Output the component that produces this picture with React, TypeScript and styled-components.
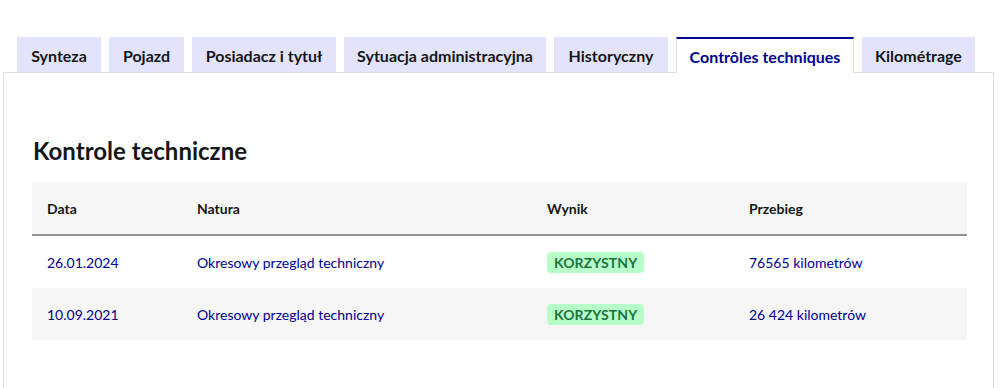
import styled, { createGlobalStyle } from "styled-components";

const GlobalStyle = createGlobalStyle`
  body {
    margin: 0;
    background: #fff;
    font-family: Lato, "Noto Sans", sans-serif;
    color: #161616;
  }
`;

const Page = styled.div`
  padding: 37px 0 0 3px;
  width: 991px;
`;

const TabList = styled.div`
  display: flex;
  gap: 8px;
  padding-left: 14px;
  position: relative;
  z-index: 1;
  margin-bottom: -1px;
`;

const Tab = styled.div<{ $active?: boolean; $w: number }>`
  box-sizing: border-box;
  width: ${(p) => p.$w}px;
  height: ${(p) => (p.$active ? 36 : 35)}px;
  display: flex;
  align-items: center;
  justify-content: center;
  font-size: 16px;
  font-weight: 700;
  white-space: nowrap;
  background: ${(p) => (p.$active ? "#fff" : "#e3e3fd")};
  color: ${(p) => (p.$active ? "#000091" : "#161616")};
  border-top: ${(p) => (p.$active ? "2px solid #000091" : "none")};
  border-left: ${(p) => (p.$active ? "1px solid #ddd" : "none")};
  border-right: ${(p) => (p.$active ? "1px solid #ddd" : "none")};
  padding-top: ${(p) => (p.$active ? 0 : 1)}px;
`;

const Panel = styled.section`
  border: 1px solid #dddddd;
  border-bottom: none;
  height: 320px;
  padding: 0 26px 0 28px;
`;

const Title = styled.h2`
  margin: 64px 0 17px 1px;
  font-size: 24px;
  font-weight: 700;
  line-height: 28px;
  color: #161616;
`;

const Table = styled.table`
  width: 100%;
  table-layout: fixed;
  border-collapse: collapse;
  font-size: 14px;
`;

const HeadCell = styled.th<{ $w?: number }>`
  box-sizing: border-box;
  width: ${(p) => (p.$w ? `${p.$w}px` : "auto")};
  text-align: left;
  font-weight: 700;
  background: #f6f6f6;
  height: 53px;
  padding: 0 15px;
  border-bottom: 2px solid #929292;
  color: #161616;
`;

const Row = styled.tr<{ $alt?: boolean }>`
  background: ${(p) => (p.$alt ? "#f6f6f6" : "#fff")};
`;

const Cell = styled.td`
  height: 52px;
  padding: 0 15px;
  color: #000091;
  white-space: nowrap;
`;

const Badge = styled.span`
  display: inline-block;
  background: #b8fec9;
  color: #18753c;
  font-weight: 700;
  font-size: 14px;
  letter-spacing: 0.1px;
  line-height: 21px;
  padding: 0 7px;
  border-radius: 4px;
`;

const tabs = [
  { label: "Synteza", w: 84 },
  { label: "Pojazd", w: 75 },
  { label: "Posiadacz i tytuł", w: 144 },
  { label: "Sytuacja administracyjna", w: 202 },
  { label: "Historyczny", w: 114 },
  { label: "Contrôles techniques", w: 178, active: true },
  { label: "Kilométrage", w: 113 },
];

const rows = [
  { date: "26.01.2024", nature: "Okresowy przegląd techniczny", km: "76565 kilometrów" },
  { date: "10.09.2021", nature: "Okresowy przegląd techniczny", km: "26 424 kilometrów" },
];

export default function App() {
  return (
    <>
      <GlobalStyle />
      <Page>
        <TabList>
          {tabs.map((t) => (
            <Tab key={t.label} $w={t.w} $active={t.active}>
              {t.label}
            </Tab>
          ))}
        </TabList>
        <Panel>
          <Title>Kontrole techniczne</Title>
          <Table>
            <thead>
              <tr>
                <HeadCell $w={150}>Data</HeadCell>
                <HeadCell $w={350}>Natura</HeadCell>
                <HeadCell $w={202}>Wynik</HeadCell>
                <HeadCell>Przebieg</HeadCell>
              </tr>
            </thead>
            <tbody>
              {rows.map((r, i) => (
                <Row key={r.date} $alt={i % 2 === 1}>
                  <Cell>{r.date}</Cell>
                  <Cell>{r.nature}</Cell>
                  <Cell>
                    <Badge>KORZYSTNY</Badge>
                  </Cell>
                  <Cell>{r.km}</Cell>
                </Row>
              ))}
            </tbody>
          </Table>
        </Panel>
      </Page>
    </>
  );
}
